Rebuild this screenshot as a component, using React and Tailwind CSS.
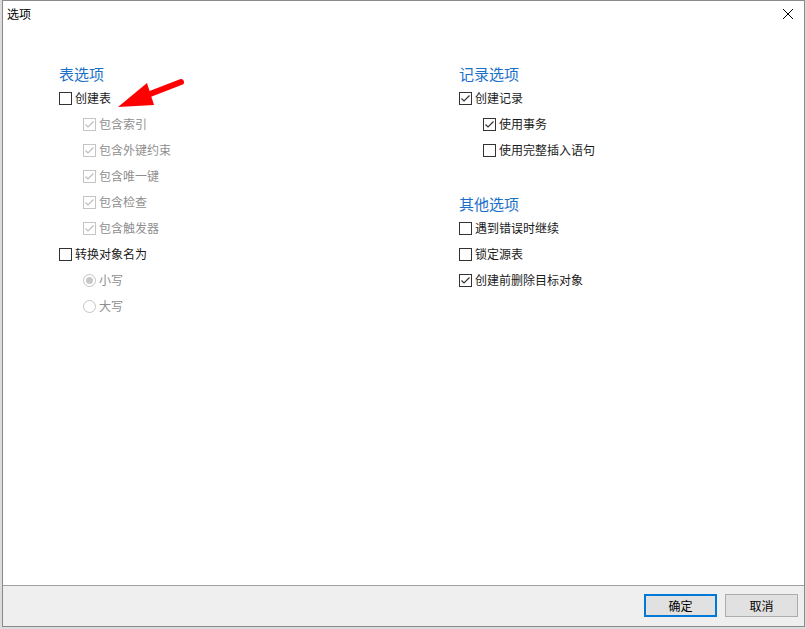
import React from 'react';

const font = { fontFamily: '"Noto Sans CJK SC", "Microsoft YaHei", sans-serif' };

const CheckBox = ({ checked, disabled }) => (
  <span
    className={`w-[13px] h-[13px] shrink-0 border bg-white flex items-center justify-center ${
      disabled ? 'border-[#c4c4c4]' : 'border-[#333333]'
    }`}
  >
    {checked && (
      <svg width="11" height="11" viewBox="0 0 11 11">
        <polyline
          points="1.5,5.5 4,8 9.5,2.5"
          fill="none"
          stroke={disabled ? '#bdbdbd' : '#333333'}
          strokeWidth="1.2"
        />
      </svg>
    )}
  </span>
);

const Radio = ({ checked }) => (
  <span className="w-[13px] h-[13px] shrink-0 rounded-full border border-[#c4c4c4] bg-white flex items-center justify-center">
    {checked && <span className="w-[7px] h-[7px] rounded-full bg-[#c8c8c8]" />}
  </span>
);

const Row = ({ label, checked, disabled, indent, radio }) => (
  <div className={`h-[26px] flex items-center gap-[3px] ${indent ? 'pl-[24px]' : ''}`}>
    {radio ? <Radio checked={checked} /> : <CheckBox checked={checked} disabled={disabled} />}
    <span className={`text-[12px] leading-none ${disabled ? 'text-[#8f8f8f]' : 'text-[#1a1a1a]'}`}>{label}</span>
  </div>
);

const Heading = ({ children, className = '' }) => (
  <div className={`h-[23px] flex items-center text-[15px] leading-none text-[#1a6fc9] ${className}`}>{children}</div>
);

export default function App() {
  return (
    <div className="relative w-[806px] h-[629px] bg-[#dcdcdc] overflow-hidden" style={font}>
      <div className="ml-[2px] w-[803px] h-[627px] border border-[#8a8a8a] bg-white flex flex-col">
        {/* title bar */}
        <div className="h-[26px] flex items-center justify-between pl-[4px] pr-[10px]">
          <span className="text-[12px] leading-none text-black">选项</span>
          <svg width="12" height="12" viewBox="0 0 12 12">
            <path d="M1 1 L11 11 M11 1 L1 11" stroke="#000" strokeWidth="1" />
          </svg>
        </div>

        {/* options */}
        <div className="flex-1 flex pl-[56px] pt-[35px]">
          <div className="w-[400px] flex flex-col">
            <Heading>表选项</Heading>
            <Row label="创建表" />
            <Row label="包含索引" checked disabled indent />
            <Row label="包含外键约束" checked disabled indent />
            <Row label="包含唯一键" checked disabled indent />
            <Row label="包含检查" checked disabled indent />
            <Row label="包含触发器" checked disabled indent />
            <Row label="转换对象名为" />
            <Row label="小写" radio checked disabled indent />
            <Row label="大写" radio disabled indent />
          </div>
          <div className="flex flex-col">
            <Heading>记录选项</Heading>
            <Row label="创建记录" checked />
            <Row label="使用事务" checked indent />
            <Row label="使用完整插入语句" indent />
            <Heading className="mt-[29px]">其他选项</Heading>
            <Row label="遇到错误时继续" />
            <Row label="锁定源表" />
            <Row label="创建前删除目标对象" checked />
          </div>
        </div>

        {/* footer */}
        <div className="h-[41px] border-t border-[#a0a0a0] bg-[#efefef] flex justify-end items-start gap-[8px] pt-[8px] pr-[6px]">
          <button className="w-[73px] h-[23px] border-2 border-[#0078d7] bg-[#e1e1e1] text-[12px] leading-none text-black">
            确定
          </button>
          <button className="w-[73px] h-[23px] border border-[#adadad] bg-[#e1e1e1] text-[12px] leading-none text-black">
            取消
          </button>
        </div>
      </div>

      {/* red annotation arrow */}
      <svg className="absolute left-0 top-0 pointer-events-none" width="806" height="629">
        <line x1="150" y1="94" x2="181" y2="82" stroke="#ff0000" strokeWidth="6" strokeLinecap="round" />
        <polygon points="118,107 147,83 154,105" fill="#ff0000" />
      </svg>
    </div>
  );
}
